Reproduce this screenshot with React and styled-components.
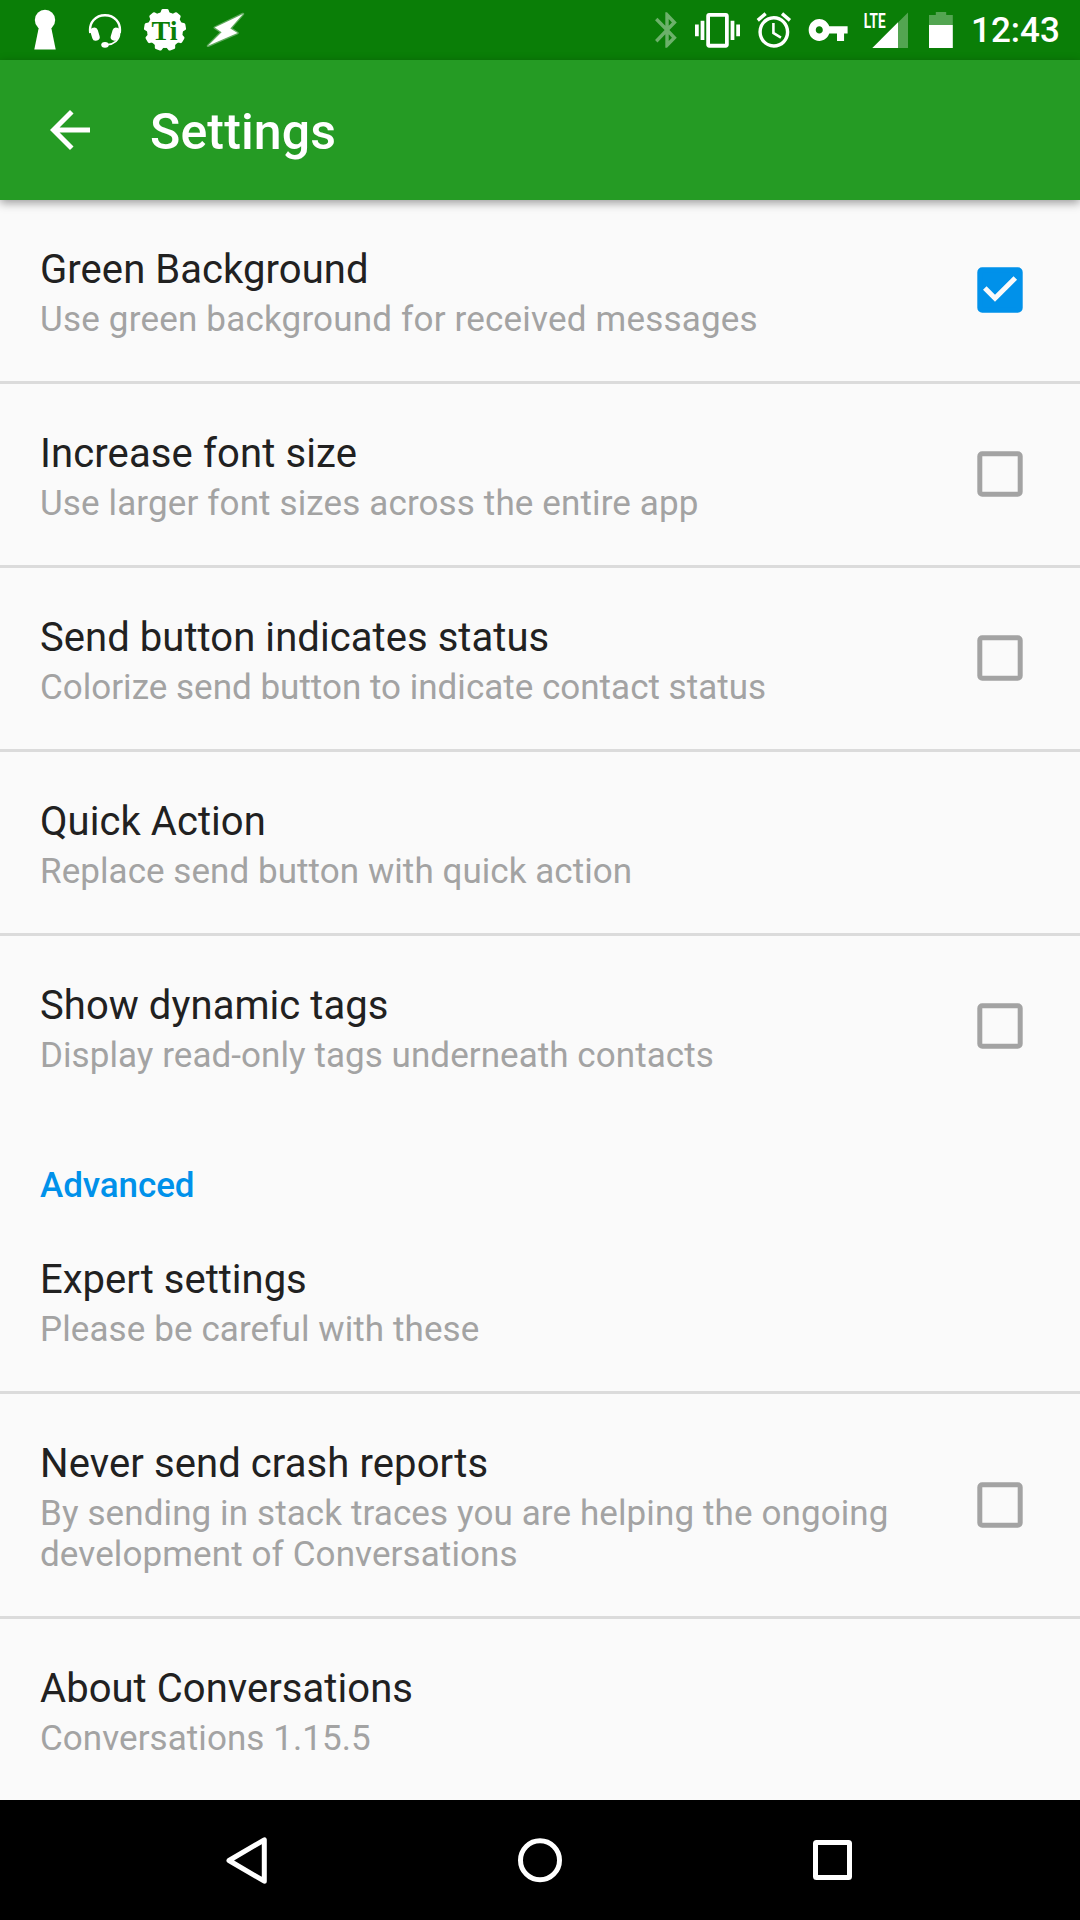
import React from "react";
import styled, { createGlobalStyle } from "styled-components";

const GlobalStyle = createGlobalStyle`
  * { box-sizing: border-box; }
  body { margin: 0; background: #fafafa; font-family: Roboto, "Noto Sans", sans-serif; }
`;

const Screen = styled.div`
  display: flex;
  flex-direction: column;
  width: 1080px;
  height: 1920px;
  overflow: hidden;
  background: #fafafa;
`;

const StatusBar = styled.header`
  display: flex;
  justify-content: space-between;
  height: 60px;
  flex: none;
  padding: 0 21px 0 33px;
  background: #0a7e07;
`;

const IconGroup = styled.div`
  display: flex;
  align-items: center;
`;

const Glyph = styled.svg`
  display: block;
  flex: none;
  fill: #fff;
  margin-left: ${(p) => p.$before || 0}px;
`;

const Clock = styled.time`
  width: 88px;
  margin-left: 17px;
  padding-top: 1px;
  color: #fff;
  font-size: 35px;
  font-weight: 500;
  line-height: 41px;
  white-space: nowrap;
`;

const AppBar = styled.div`
  display: flex;
  align-items: center;
  height: 140px;
  flex: none;
  padding-left: 40px;
  gap: 50px;
  background: #259b24;
  box-shadow: 0 3px 9px rgba(0, 0, 0, 0.38);
  z-index: 1;
`;

const AppTitle = styled.h1`
  margin: 0;
  padding-top: 4px;
  color: #fff;
  font-size: 50px;
  font-weight: 500;
  line-height: 59px;
  letter-spacing: 0.14px;
`;

const List = styled.main`
  flex: 1;
  display: flex;
  flex-direction: column;
`;

const Row = styled.div`
  display: flex;
  align-items: center;
  justify-content: space-between;
  padding: 0 57px 0 40px;
  border-bottom: ${(p) => (p.$divider ? "3px solid #dbdbdb" : "none")};
`;

const RowText = styled.div`
  display: flex;
  flex-direction: column;
  gap: 6px;
  width: 870px;
  padding: 46px 0 41px;
`;

const Title = styled.div`
  color: #212121;
  font-size: 40px;
  line-height: 47px;
  letter-spacing: ${(p) => p.$tracking}px;
`;

const Summary = styled.div`
  color: #a3a3a3;
  font-size: 35px;
  line-height: 41px;
  letter-spacing: ${(p) => p.$tracking}px;
`;

const SectionHeader = styled.h2`
  margin: 0;
  padding: 48px 40px 4px;
  color: #0091ea;
  font-size: 35px;
  font-weight: 500;
  line-height: 41px;
  letter-spacing: -0.08px;
`;

const CheckboxIcon = styled.svg`
  display: block;
  flex: none;
  margin-bottom: 1px;
  color: ${(p) => (p.$checked ? "#0091ea" : "#a3a3a3")};
`;

const NavBar = styled.nav`
  display: flex;
  align-items: center;
  justify-content: space-between;
  height: 120px;
  flex: none;
  padding: 0 222px;
  background: #000;
`;

const NavIcon = styled.svg`
  display: block;
  fill: none;
  stroke: #fff;
  stroke-width: 5;
`;

const Shape = ({ x, w, before, children }) => (
  <Glyph $before={before} width={w} height="60" viewBox={`${x} 0 ${w} 60`}>
    {children}
  </Glyph>
);

const GEAR_TEETH = [0, 40, 80, 120, 160, 200, 240, 280, 320];

const Checkbox = ({ checked }) => (
  <CheckboxIcon $checked={checked} width="46" height="46" viewBox="0 0 46 46">
    <rect
      x="2.8"
      y="2.8"
      width="40.4"
      height="40.4"
      rx="2.4"
      fill={checked ? "currentColor" : "none"}
      stroke="currentColor"
      strokeWidth="5"
    />
    {checked && <path d="M7.8 21L18 31.2L38.3 10.9" fill="none" stroke="#fafafa" strokeWidth="5" />}
  </CheckboxIcon>
);

const Preference = ({ title, summary, checked, divider, tracking }) => (
  <Row $divider={divider}>
    <RowText>
      <Title $tracking={tracking[0]}>{title}</Title>
      <Summary $tracking={tracking[1]}>{summary}</Summary>
    </RowText>
    {checked !== undefined && <Checkbox checked={checked} />}
  </Row>
);

const INTERFACE = [
  { title: "Green Background", summary: "Use green background for received messages", checked: true, divider: true, tracking: [0.07, 0.2] },
  { title: "Increase font size", summary: "Use larger font sizes across the entire app", checked: false, divider: true, tracking: [0.13, 0.13] },
  { title: "Send button indicates status", summary: "Colorize send button to indicate contact status", checked: false, divider: true, tracking: [0.06, 0.01] },
  { title: "Quick Action", summary: "Replace send button with quick action", divider: true, tracking: [0.06, 0.06] },
  { title: "Show dynamic tags", summary: "Display read-only tags underneath contacts", checked: false, tracking: [0.06, 0.06] },
];

const ADVANCED = [
  { title: "Expert settings", summary: "Please be careful with these", divider: true, tracking: [0, 0.1] },
  {
    title: "Never send crash reports",
    summary: "By sending in stack traces you are helping the ongoing development of Conversations",
    checked: false,
    divider: true,
    tracking: [0.1, 0.11],
  },
  { title: "About Conversations", summary: "Conversations 1.15.5", tracking: [0.05, 0.06] },
];

export default function App() {
  return (
    <Screen>
      <GlobalStyle />
      <StatusBar>
        <IconGroup>
          <Shape x={33} w={24}>
            <circle cx="45" cy="20" r="10.2" />
            <path d="M39.3 25h11.4l5 24.6H34.3z" />
          </Shape>
          <Shape x={88} w={34} before={31}>
            <path d="M90.3 33C88.6 22 96 15.2 105 15.2S121.4 22 119.7 33" fill="none" stroke="#fff" strokeWidth="2.4" />
            <path d="M119.6 33C119.6 40 114 44.2 107 44.8" fill="none" stroke="#fff" strokeWidth="1.6" />
            <rect x="91.2" y="27.4" width="7.6" height="13.4" rx="3.6" transform="rotate(-17 95 34)" />
            <rect x="111.6" y="27.4" width="7.6" height="13.4" rx="3.6" transform="rotate(17 115.2 34)" />
            <ellipse cx="105" cy="44.8" rx="3.8" ry="2.9" />
          </Shape>
          <Shape x={143} w={44} before={21}>
            <circle cx="165" cy="30" r="18" />
            {GEAR_TEETH.map((a) => (
              <path key={a} d="M160 14l1.4-3.9q.3-1.1 1.5-1.1h4.2q1.2 0 1.5 1.1L170 14z" transform={`rotate(${a} 165 30)`} />
            ))}
            <text x="151.6" y="39.6" fontFamily="Liberation Serif, serif" fontWeight="700" fontSize="28" fill="#0a7e07">Ti</text>
          </Shape>
          <Shape x={204} w={44} before={17}>
            <path
              d="M243 14L214.8 27.6L221.6 32.2L208 45.8L237.5 33L230.3 28.4Z"
              stroke="#fff"
              strokeOpacity=".35"
              strokeWidth="2.6"
              strokeLinejoin="round"
            />
          </Shape>
        </IconGroup>
        <IconGroup>
          <Shape x={654} w={24}>
            <path
              opacity=".4"
              transform="translate(646.5 8.8) scale(1.71 1.77)"
              d="M17.71 7.71L12 2h-1v7.59L6.41 5 5 6.41 10.59 12 5 17.59 6.41 19 11 14.41V22h1l5.71-5.71-4.3-4.29 4.3-4.29zM13 5.83l1.88 1.88L13 9.59V5.83zm1.88 10.46L13 18.17v-3.76l1.88 1.88z"
            />
          </Shape>
          <Shape x={694} w={48} before={16}>
            <path
              transform="translate(695 7.2) scale(1.875 1.93)"
              d="M0 15h2V9H0v6zm3 2h2V7H3v10zm19-8v6h2V9h-2zm-3 8h2V7h-2v10zM16.5 3h-9C6.67 3 6 3.67 6 4.5v15c0 .83.67 1.5 1.5 1.5h9c.83 0 1.5-.67 1.5-1.5v-15c0-.83-.67-1.5-1.5-1.5zM16 19H8V5h8v14z"
            />
          </Shape>
          <Shape x={756} w={36} before={14}>
            <path
              transform="translate(753.2 9) scale(1.72 1.76)"
              d="M22 5.72l-4.6-3.86-1.29 1.53 4.6 3.86L22 5.72zM7.88 3.39L6.6 1.86 2 5.71l1.29 1.53 4.59-3.85zM12.5 8H11v6l4.75 2.85.75-1.23-4-2.37V8zM12 4c-4.97 0-9 4.03-9 9s4.02 9 9 9c4.97 0 9-4.03 9-9s-4.03-9-9-9zm0 16c-3.87 0-7-3.13-7-7s3.13-7 7-7 7 3.13 7 7-3.13 7-7 7z"
            />
          </Shape>
          <Shape x={808} w={40} before={16}>
            <path
              transform="translate(806.9 8) scale(1.77 1.83)"
              d="M12.65 10C11.83 7.67 9.61 6 7 6c-3.31 0-6 2.69-6 6s2.69 6 6 6c2.61 0 4.83-1.67 5.65-4H17v4h4v-4h2v-4H12.65zM7 14c-1.1 0-2-.9-2-2s.9-2 2-2 2 .9 2 2-.9 2-2 2z"
            />
          </Shape>
          <Shape x={863} w={46} before={15}>
            <path opacity=".3" d="M898 22.5L908 12.5V48H898z" />
            <path d="M872.3 48L898 22.3V48z" />
            <text transform="translate(863.7 28) scale(.68 1)" fontFamily="Roboto, sans-serif" fontWeight="700" fontSize="20">LTE</text>
          </Shape>
          <Shape x={928} w={26} before={19}>
            <path opacity=".3" d="M929 25V15h6.8v-3h10.4v3h6.6v10z" />
            <path d="M929 25h23.8v23H929z" />
          </Shape>
          <Clock>12:43</Clock>
        </IconGroup>
      </StatusBar>
      <AppBar>
        <Glyph width="60" height="60" viewBox="0 0 24 24">
          <path d="M20 11H7.83l5.59-5.59L12 4l-8 8 8 8 1.41-1.41L7.83 13H20v-2z" />
        </Glyph>
        <AppTitle>Settings</AppTitle>
      </AppBar>
      <List>
        {INTERFACE.map((item) => (
          <Preference key={item.title} {...item} />
        ))}
        <SectionHeader>Advanced</SectionHeader>
        {ADVANCED.map((item) => (
          <Preference key={item.title} {...item} />
        ))}
      </List>
      <NavBar>
        <NavIcon width="50" height="120" viewBox="222 1800 50 120">
          <path d="M229 1860.5L264.3 1839.8V1881.2Z" strokeLinejoin="round" />
        </NavIcon>
        <NavIcon width="50" height="120" viewBox="515 1800 50 120">
          <circle cx="540" cy="1860.3" r="19.5" />
        </NavIcon>
        <NavIcon width="50" height="120" viewBox="808 1800 50 120">
          <rect x="815.5" y="1842.5" width="34" height="35" rx="1" strokeLinejoin="round" />
        </NavIcon>
      </NavBar>
    </Screen>
  );
}
